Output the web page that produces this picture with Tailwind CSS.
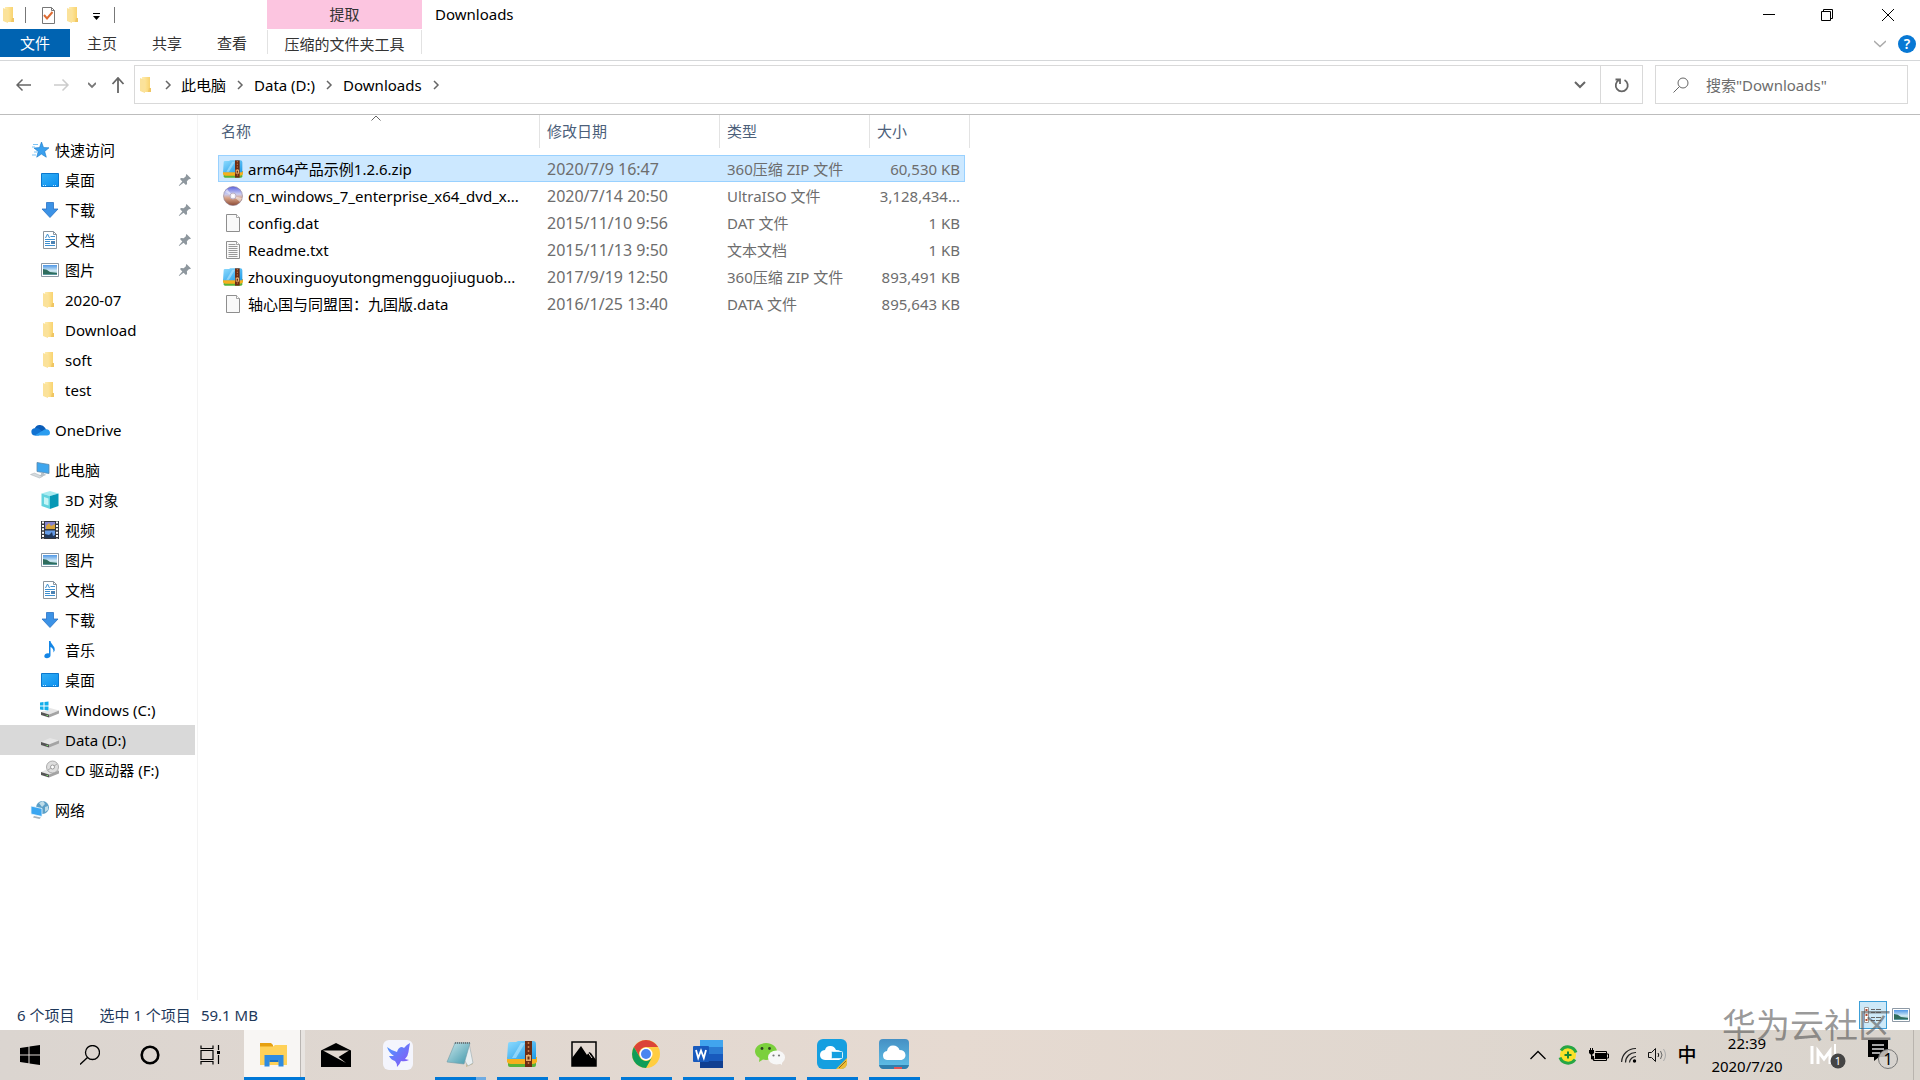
<!DOCTYPE html>
<html lang="zh-CN">
<head>
  <meta charset="UTF-8" />
  <meta name="viewport" content="width=device-width, initial-scale=1.0" />
  <title>Downloads</title>
  <script src="https://cdn.jsdelivr.net/npm/@tailwindcss/browser@4"></script>
</head>
<body class="h-screen flex flex-col overflow-hidden bg-white text-black text-[15px] leading-5 font-['Noto_Sans','Noto_Sans_CJK_SC',sans-serif]">

  <!-- Shared icons -->
  <svg class="absolute w-0 h-0">
    <defs>
      <linearGradient id="gFolder"><stop offset="0" stop-color="#ffedb0"/><stop offset="1" stop-color="#f8d068"/></linearGradient>
      <linearGradient id="gDesk" x2="1" y2="1"><stop offset="0" stop-color="#35b0f5"/><stop offset="1" stop-color="#0a8ff0"/></linearGradient>
      <linearGradient id="gZip" x2="1" y2="1"><stop offset="0" stop-color="#8fdcff"/><stop offset="1" stop-color="#1e9ae6"/></linearGradient>
      <linearGradient id="gDisc" x2="0" y2="1"><stop offset="0" stop-color="#5a62e0"/><stop offset=".4" stop-color="#c9cdf2"/><stop offset=".6" stop-color="#d9a58a"/><stop offset="1" stop-color="#8c4a34"/></linearGradient>
      <linearGradient id="gSky" x2="0" y2="1"><stop offset="0" stop-color="#4f97e6"/><stop offset=".6" stop-color="#d5ecf5"/><stop offset="1" stop-color="#4a8d92"/></linearGradient>
      <linearGradient id="gNote" x2="1" y2="1"><stop offset="0" stop-color="#c8e6ea"/><stop offset="1" stop-color="#3f97ab"/></linearGradient>
      <linearGradient id="gBird" x2="1" y2="1"><stop offset="0" stop-color="#4d9bff"/><stop offset="1" stop-color="#8a52f5"/></linearGradient>
      <linearGradient id="gCloud" x2="0" y2="1"><stop offset="0" stop-color="#4590c4"/><stop offset="1" stop-color="#5fc0e8"/></linearGradient>
    </defs>
    <symbol id="folder" viewBox="0 0 20 20">
      <path fill="url(#gFolder)" d="M5 2h8v11l1 1v3H5z"/><path fill="#fbe29a" d="M3 3l5 2v13l-5-2z"/><path fill="#f0c663" d="M12 13h2v4h-3z"/>
    </symbol>
    <symbol id="star" viewBox="0 0 20 20">
      <path fill="#3aa0ee" stroke="#1878c8" stroke-width=".6" d="M11.500 2l2 5.500 5.500.3-4.300 3.600 1.600 5.800-4.900-3.100-4.700 3.100 1.500-5.600L4 8l5.500-.4z"/>
      <path stroke="#7cc4f6" stroke-width="1.200" d="M3 4.500h5M2 7h3M4 12h3M2 15h4"/>
    </symbol>
    <symbol id="desktop" viewBox="0 0 20 20">
      <path fill="url(#gDesk)" stroke="#0b78ce" d="M1.500 3.500h17v13h-17z"/><path stroke="#fff" stroke-dasharray="1 1" stroke-width=".8" d="M3 15.500h4M13 15.500h4"/>
    </symbol>
    <symbol id="download" viewBox="0 0 20 20">
      <path fill="#3b92e6" stroke="#2a72c4" stroke-width=".8" d="M6.500 2.500h7V9H18l-8 8.500L2 9h4.500z"/>
    </symbol>
    <symbol id="doc" viewBox="0 0 20 20">
      <path fill="#fff" stroke="#8b959e" d="M3.500 1.500h10l3 3v14h-13z"/><path fill="none" stroke="#8b959e" d="M13.500 1.500v3h3"/>
      <path fill="none" stroke="#3d8fd0" d="M5.500 8l2-4 2 4M10.500 6.500H15M5 9.500h10M5 11.500h5M5 13.500h5M5 15.500h10"/><path fill="#4d83b4" d="M11 11h4v3h-4z"/>
    </symbol>
    <symbol id="picture" viewBox="0 0 20 20">
      <path fill="#fff" stroke="#8d99a5" d="M1.500 3.500h17v13h-17z"/><path fill="url(#gSky)" d="M3 5h14v10H3z"/><path fill="#2f6d5d" d="M3 9q4 0 7 3l7 1v1H3z"/>
    </symbol>
    <symbol id="pin" viewBox="0 0 14 14">
      <path fill="#8e979e" d="M8.500 1l4.500 4.500-1.400.8-.5-.3-2.200 2.300.2 2.700-1.200 1L5.600 9.700 1.200 13l-.4-.4L4.300 8.400 2 6.100l1-1.200 2.700.3 2.400-2.300-.3-.6z"/>
    </symbol>
    <symbol id="onedrive" viewBox="0 0 22 20">
      <path fill="#0a5cb8" d="M5 8.500a6.500 6.500 0 0 1 11.500-1L18 10l-8 5z"/><path fill="#1273d2" d="M5.500 8q3-.5 5 1.200l4 3-5 3.800H5.500a4 4 0 0 1 0-8z"/><path fill="#2a9df0" d="M5 16l11-6.500c3.500-1.300 6 1 6 3.500s-2 3-3 3z"/>
    </symbol>
    <symbol id="pc" viewBox="0 0 20 20">
      <path fill="#3ea6ee" stroke="#5d89aa" stroke-width=".8" d="M7 2.500l12 2v9l-12-2z"/><path fill="#b9c2c9" d="M11 12.500l3 .5v2h-3zM9 15l6-1 1 1-5 2z"/><path fill="#d4dadd" stroke="#a6afb5" stroke-width=".5" d="M.5 14.500l4-1.500 8 3.500-3 1.500z"/>
    </symbol>
    <symbol id="cube" viewBox="0 0 20 20">
      <path fill="#a8ebf0" d="M10 1l8.500 2.500L10 6 1.500 3.500z"/><path fill="#62d3de" d="M1.500 3.500L10 6v13l-8.500-3z"/><path fill="#0798b5" d="M18.500 3.500L10 6v13l8.500-3z"/><path fill="#c6f5f6" d="M4 7l4.500 1.500v7L4 14z"/>
    </symbol>
    <symbol id="video" viewBox="0 0 20 20">
      <path fill="#34373d" d="M1 1h18v18H1z"/><path stroke="#fff" stroke-width="2" stroke-dasharray="2 1.400" d="M3 1.500v18M17 1.500v18"/><path fill="#8583cf" d="M5 2h10v7H5z"/><path fill="#d7a43c" d="M6 6l3-3 2 3 4-2v5H6z"/><path fill="#649be6" d="M5 10.500h10V18H5z"/><path fill="#20395d" d="M5 14l4 1 3-3 1 4 2-1v3H5z"/>
    </symbol>
    <symbol id="music" viewBox="0 0 20 20">
      <path fill="#1486e6" d="M9 1h1.500c.4 3.500 5 5 4.200 9.500l-1.200 2c.3-3-1-4.500-3-5.500v8.500c0 3-6 4-6.200.8C4.300 14 7 12.800 9 13.500z"/>
    </symbol>
    <symbol id="drive" viewBox="0 0 20 20">
      <path fill="#e6e6e6" d="M1 12l9-4 9 2.500-10 4z"/><path fill="#555" d="M1 12l8 2.500v3L1 15z"/><path fill="#a4a4a4" d="M9 14.500l10-4v3l-10 4z"/><path fill="#7be06c" d="M6.500 15h1.500v1H6.500z"/>
    </symbol>
    <symbol id="windrive" viewBox="0 0 20 20">
      <use href="#drive"/><path fill="#fff" d="M0 1h9v10H0z"/><path fill="#14aeea" d="M0 2.500L3.500 2v3.500H0zM4.500 2L8.500 1.500v4h-4zM0 6.500h3.500V10L0 9.500zM4.500 6.500h4v4l-4-.5z"/>
    </symbol>
    <symbol id="cddrive" viewBox="0 0 20 20">
      <use href="#drive"/><circle cx="12.500" cy="7" r="6" fill="#dedede" stroke="#999" stroke-width=".8"/><circle cx="12.500" cy="7" r="2" fill="#fff" stroke="#888" stroke-width=".8"/><path stroke="#aaa" d="M8 10l3-2M14 6l3-2"/>
    </symbol>
    <symbol id="network" viewBox="0 0 20 20">
      <circle cx="12.500" cy="7.500" r="6.500" fill="#5c9fc6"/><path fill="#bfdde9" d="M9 3l4-2 2 3-3 3zM15 7l3-1v4l-3 2z"/><path fill="#3aa6f1" stroke="#eef7fc" stroke-width=".8" d="M1 6l11 2.500v8L1 14z"/><path fill="#a7b2ba" d="M4 16l7 1.500-1.500 1.500L3 17.500z"/>
    </symbol>
    <symbol id="zip" viewBox="0 0 30 28">
      <path fill="#58b33a" d="M1 20h28v5q0 2-2 2H3q-2 0-2-2z"/><path fill="#f5b01e" d="M0 17h30v5q-2 2-4 2H4q-3 0-4-2z"/><path fill="url(#gZip)" d="M1 4q0-2 2-2h6l2-1h15q3 0 3 3v15H0z"/><path fill="#b7e8ff" opacity=".6" d="M5 18L14 3h4L9 18z"/>
      <path fill="#6b2c13" d="M18 1h7v26h-7z"/><path stroke="#c77a45" stroke-width="1.500" stroke-dasharray="2 2" d="M21.500 2v24"/><path fill="#e7b070" d="M19 15h5v6h-5z"/><path fill="#6b2c13" d="M20.500 16.500h2v3h-2z"/>
    </symbol>
    <symbol id="disc" viewBox="0 0 20 20">
      <circle cx="10" cy="10" r="9.500" fill="url(#gDisc)" stroke="#8b7d92" stroke-width=".6"/><path fill="#fff" opacity=".5" d="M10 10L2 6l2-3zM10 10l9 2-2 4z"/><circle cx="10" cy="10" r="3" fill="#f5f1f7" stroke="#b9b0c4"/><circle cx="10" cy="10" r="1.200" fill="#fff"/>
    </symbol>
    <symbol id="file" viewBox="0 0 20 20">
      <path fill="#f9f9f9" stroke="#8e8e8e" d="M3.500 1.500h10l3 3v14h-13z"/><path fill="#fff" stroke="#8e8e8e" stroke-width=".8" d="M13.500 1.500v3h3"/>
    </symbol>
    <symbol id="text" viewBox="0 0 20 20">
      <use href="#file"/><path stroke="#999" d="M5.500 4.500h7M5.500 6.500h9M5.500 8.500h9M5.500 10.500h9M5.500 12.500h9M5.500 14.500h9M5.500 16.500h9"/>
    </symbol>
    <symbol id="chev" viewBox="0 0 8 10"><path fill="none" stroke="#666" stroke-width="1.500" d="M2 1l4 4-4 4"/></symbol>
  </svg>

  <!-- Title bar and ribbon tabs -->
  <header class="flex h-[61px] shrink-0 border-b border-[#d5d7d9]">
    <div class="w-[267px] shrink-0 flex flex-col">
      <div class="h-[29px] flex items-center">
        <svg class="w-5 h-5"><use href="#folder"/></svg>
        <span class="w-px h-4 bg-[#777] ml-[5px]"></span>
        <button class="ml-3 w-5 h-5" aria-label="属性">
          <svg class="w-5 h-5" viewBox="0 0 20 20"><path fill="#fff" stroke="#777" d="M4.500 2.500h9l3 3v13h-12z"/><path fill="none" stroke="#777" d="M13.500 2.500v3h3"/><path fill="none" stroke="#dd6b33" stroke-width="2" d="M6 10l3 3.500L14.500 7"/></svg>
        </button>
        <button class="ml-[6px] w-5 h-5" aria-label="新建文件夹"><svg class="w-5 h-5"><use href="#folder"/></svg></button>
        <button class="ml-[6px] w-3 h-5" aria-label="自定义快速访问工具栏">
          <svg class="w-3 h-5" viewBox="0 0 12 20"><path d="M3 8h7v1H3zM3 11h7l-3.500 4z"/></svg>
        </button>
        <span class="w-px h-4 bg-[#777] ml-3"></span>
      </div>
      <div class="h-7 flex items-center">
        <button class="w-[70px] h-7 bg-[#0063b1] text-white">文件</button>
        <button class="w-16 h-7 text-[#333]">主页</button>
        <button class="w-[66px] h-7 text-[#333]">共享</button>
        <button class="w-16 h-7 text-[#333]">查看</button>
      </div>
    </div>
    <div class="w-[155px] shrink-0 text-center text-[#333]">
      <div class="h-[29px] leading-7 bg-[#fcc5e0]">提取</div>
      <button class="w-full h-6 mt-px border-x border-[#e2e2e2] pt-1">压缩的文件夹工具</button>
    </div>
    <h1 class="h-[29px] leading-[29px] ml-[13px] grow">Downloads</h1>
    <div class="flex flex-col">
      <div class="h-[29px] flex items-center">
        <button class="w-[58px] h-7 grid place-items-center" aria-label="最小化"><svg class="w-3 h-3" viewBox="0 0 12 12"><path stroke="#000" d="M0 5.500h12"/></svg></button>
        <button class="w-[58px] h-7 grid place-items-center" aria-label="还原"><svg class="w-3 h-3" viewBox="0 0 12 12"><path fill="none" stroke="#000" d="M.5 2.500h9v9h-9zM2.500 2.500v-2h9v9h-2"/></svg></button>
        <button class="w-16 h-7 grid place-items-center" aria-label="关闭"><svg class="w-3 h-3" viewBox="0 0 12 12"><path stroke="#000" d="M0 0l12 12M12 0L0 12"/></svg></button>
      </div>
      <div class="h-[30px] flex items-center justify-end gap-3 pr-1">
        <button aria-label="展开功能区"><svg class="w-3 h-2" viewBox="0 0 12 8"><path fill="none" stroke="#aaa" stroke-width="1.500" d="M0 1l6 5.500L12 1"/></svg></button>
        <button class="w-[18px] h-[18px] rounded-full bg-[#0878d4] text-white text-[14px] font-semibold leading-[18px]" aria-label="帮助">?</button>
      </div>
    </div>
  </header>

  <!-- Address bar -->
  <div class="flex items-center h-[54px] shrink-0 pt-1 pb-[10px] pr-3 border-b border-[#bdbdbd]">
    <div class="flex items-center w-[130px] pl-4">
      <button aria-label="后退"><svg class="w-4 h-4" viewBox="0 0 16 16"><path fill="none" stroke="#666" stroke-width="1.500" d="M15 8H1M6.500 2.500L1 8l5.500 5.500"/></svg></button>
      <button class="ml-[22px]" aria-label="前进"><svg class="w-4 h-4" viewBox="0 0 16 16"><path fill="none" stroke="#ccc" stroke-width="1.500" d="M0 8h14M8.500 2.500L14 8l-5.500 5.500"/></svg></button>
      <button class="ml-[18px]" aria-label="最近浏览的位置"><svg class="w-2 h-2" viewBox="0 0 8 8"><path fill="none" stroke="#777" stroke-width="1.800" d="M0 2l4 4 4-4"/></svg></button>
      <button class="ml-[14px]" aria-label="上移"><svg class="w-4 h-4" viewBox="0 0 16 16"><path fill="none" stroke="#666" stroke-width="1.800" d="M8 16V1M2.500 7L8 1l5.500 6"/></svg></button>
    </div>
    <nav class="grow flex h-[39px] items-center border border-[#d9d9d9] ml-1">
      <svg class="w-5 h-5 ml-0.5"><use href="#folder"/></svg>
      <svg class="w-2 h-2.5 ml-[7px]"><use href="#chev"/></svg>
      <a href="#" class="ml-[9px]">此电脑</a>
      <svg class="w-2 h-2.5 ml-[10px]"><use href="#chev"/></svg>
      <a href="#" class="ml-[10px]">Data (D:)</a>
      <svg class="w-2 h-2.5 ml-[10px]"><use href="#chev"/></svg>
      <a href="#" class="ml-[10px]">Downloads</a>
      <svg class="w-2 h-2.5 ml-[10px]"><use href="#chev"/></svg>
      <button class="ml-auto w-10 h-full grid place-items-center" aria-label="以前的位置"><svg class="w-3 h-2" viewBox="0 0 12 8"><path fill="none" stroke="#666" stroke-width="2" d="M1 1l5 5 5-5"/></svg></button>
      <button class="w-[42px] h-full grid place-items-center border-l border-[#d9d9d9]" aria-label="刷新"><svg class="w-4 h-4" viewBox="0 0 16 16"><path fill="none" stroke="#666" stroke-width="1.800" d="M10.500 3A6 6 0 1 1 5 3M1.500 2.500H6V7"/></svg></button>
    </nav>
    <label class="ml-3 w-[253px] h-[39px] border border-[#d9d9d9] flex items-center">
      <svg class="w-4 h-4 ml-[17px]" viewBox="0 0 16 16"><circle cx="10" cy="6" r="5" fill="none" stroke="#666"/><path stroke="#666" d="M6.500 9.500L.5 15.500"/></svg>
      <input type="text" aria-label="搜索" placeholder='搜索"Downloads"' class="ml-[17px] w-40 outline-none placeholder:text-[#6d6d6d]" />
    </label>
  </div>

  <main class="flex grow min-h-0">
    <!-- Navigation pane -->
    <nav class="w-[198px] shrink-0 border-r border-[#f3f3f3] pt-5 flex flex-col gap-[10px]">
      <div>
        <a href="#" class="flex items-center h-[30px] pl-[30px] gap-[5px]"><svg class="w-5 h-5"><use href="#star"/></svg>快速访问</a>
        <a href="#" class="flex items-center h-[30px] pl-10 gap-[5px]"><svg class="w-5 h-5"><use href="#desktop"/></svg>桌面<svg class="w-3.5 h-3.5 ml-auto mr-[5px]"><use href="#pin"/></svg></a>
        <a href="#" class="flex items-center h-[30px] pl-10 gap-[5px]"><svg class="w-5 h-5"><use href="#download"/></svg>下载<svg class="w-3.5 h-3.5 ml-auto mr-[5px]"><use href="#pin"/></svg></a>
        <a href="#" class="flex items-center h-[30px] pl-10 gap-[5px]"><svg class="w-5 h-5"><use href="#doc"/></svg>文档<svg class="w-3.5 h-3.5 ml-auto mr-[5px]"><use href="#pin"/></svg></a>
        <a href="#" class="flex items-center h-[30px] pl-10 gap-[5px]"><svg class="w-5 h-5"><use href="#picture"/></svg>图片<svg class="w-3.5 h-3.5 ml-auto mr-[5px]"><use href="#pin"/></svg></a>
        <a href="#" class="flex items-center h-[30px] pl-10 gap-[5px]"><svg class="w-5 h-5"><use href="#folder"/></svg>2020-07</a>
        <a href="#" class="flex items-center h-[30px] pl-10 gap-[5px]"><svg class="w-5 h-5"><use href="#folder"/></svg>Download</a>
        <a href="#" class="flex items-center h-[30px] pl-10 gap-[5px]"><svg class="w-5 h-5"><use href="#folder"/></svg>soft</a>
        <a href="#" class="flex items-center h-[30px] pl-10 gap-[5px]"><svg class="w-5 h-5"><use href="#folder"/></svg>test</a>
      </div>
      <a href="#" class="flex items-center h-[30px] pl-[30px] gap-[5px]"><svg class="w-5 h-5"><use href="#onedrive"/></svg>OneDrive</a>
      <div>
        <a href="#" class="flex items-center h-[30px] pl-[30px] gap-[5px]"><svg class="w-5 h-5"><use href="#pc"/></svg>此电脑</a>
        <a href="#" class="flex items-center h-[30px] pl-10 gap-[5px]"><svg class="w-5 h-5"><use href="#cube"/></svg>3D 对象</a>
        <a href="#" class="flex items-center h-[30px] pl-10 gap-[5px]"><svg class="w-5 h-5"><use href="#video"/></svg>视频</a>
        <a href="#" class="flex items-center h-[30px] pl-10 gap-[5px]"><svg class="w-5 h-5"><use href="#picture"/></svg>图片</a>
        <a href="#" class="flex items-center h-[30px] pl-10 gap-[5px]"><svg class="w-5 h-5"><use href="#doc"/></svg>文档</a>
        <a href="#" class="flex items-center h-[30px] pl-10 gap-[5px]"><svg class="w-5 h-5"><use href="#download"/></svg>下载</a>
        <a href="#" class="flex items-center h-[30px] pl-10 gap-[5px]"><svg class="w-5 h-5"><use href="#music"/></svg>音乐</a>
        <a href="#" class="flex items-center h-[30px] pl-10 gap-[5px]"><svg class="w-5 h-5"><use href="#desktop"/></svg>桌面</a>
        <a href="#" class="flex items-center h-[30px] pl-10 gap-[5px]"><svg class="w-5 h-5"><use href="#windrive"/></svg>Windows (C:)</a>
        <a href="#" class="flex items-center h-[30px] pl-10 gap-[5px] mr-0.5 bg-[#d9d9d9]"><svg class="w-5 h-5"><use href="#drive"/></svg>Data (D:)</a>
        <a href="#" class="flex items-center h-[30px] pl-10 gap-[5px]"><svg class="w-5 h-5"><use href="#cddrive"/></svg>CD 驱动器 (F:)</a>
      </div>
      <a href="#" class="flex items-center h-[30px] pl-[30px] gap-[5px]"><svg class="w-5 h-5"><use href="#network"/></svg>网络</a>
    </nav>

    <!-- File list -->
    <div class="grow pl-5">
      <table class="table-fixed w-[752px] border-separate border-spacing-0 text-[#6d6d6d]">
        <colgroup><col class="w-[322px]"><col class="w-[180px]"><col class="w-[150px]"><col class="w-[95px]"><col class="w-[5px]"></colgroup>
        <thead class="text-left text-[#4c607a]">
          <tr class="h-10 align-top">
            <th class="relative p-0 font-normal">
              <svg class="absolute top-0 left-[153px] w-[10px] h-[6px]" viewBox="0 0 10 6"><path fill="none" stroke="#666" d="M.5 5.500L5 1l4.500 4.500"/></svg>
              <div class="h-[33px] leading-8 pl-[3px] border-r border-[#e3e3e3]">名称</div>
            </th>
            <th class="p-0 font-normal"><div class="h-[33px] leading-8 pl-[7px] border-r border-[#e3e3e3]">修改日期</div></th>
            <th class="p-0 font-normal"><div class="h-[33px] leading-8 pl-[7px] border-r border-[#e3e3e3]">类型</div></th>
            <th colspan="2" class="p-0 font-normal"><div class="h-[33px] leading-8 pl-[7px] border-r border-[#e3e3e3]">大小</div></th>
          </tr>
        </thead>
        <tbody>
          <tr class="h-[27px]">
            <td class="p-0 pl-1 bg-[#cce8ff] border-y border-l border-[#99d1ff] text-black"><div class="flex items-center gap-[5px]"><svg class="w-5 h-5 shrink-0"><use href="#zip"/></svg><span class="truncate">arm64产品示例1.2.6.zip</span></div></td>
            <td class="p-0 pl-[7px] bg-[#cce8ff] border-y border-[#99d1ff] text-base leading-5">2020/7/9 16:47</td>
            <td class="p-0 pl-[7px] bg-[#cce8ff] border-y border-[#99d1ff]">360压缩 ZIP 文件</td>
            <td class="p-0 pr-1 text-right bg-[#cce8ff] border-y border-r border-[#99d1ff]">60,530 KB</td>
            <td class="p-0"></td>
          </tr>
          <tr class="h-[27px]">
            <td class="p-0 pl-[5px] text-black"><div class="flex items-center gap-[5px]"><svg class="w-5 h-5 shrink-0"><use href="#disc"/></svg><span class="whitespace-nowrap">cn_windows_7_enterprise_x64_dvd_x...</span></div></td>
            <td class="p-0 pl-[7px] text-base leading-5">2020/7/14 20:50</td><td class="p-0 pl-[7px]">UltraISO 文件</td><td class="p-0 pr-[5px] text-right">3,128,434...</td><td class="p-0"></td>
          </tr>
          <tr class="h-[27px]">
            <td class="p-0 pl-[5px] text-black"><div class="flex items-center gap-[5px]"><svg class="w-5 h-5 shrink-0"><use href="#file"/></svg><span class="truncate">config.dat</span></div></td>
            <td class="p-0 pl-[7px] text-base leading-5">2015/11/10 9:56</td><td class="p-0 pl-[7px]">DAT 文件</td><td class="p-0 pr-[5px] text-right">1 KB</td><td class="p-0"></td>
          </tr>
          <tr class="h-[27px]">
            <td class="p-0 pl-[5px] text-black"><div class="flex items-center gap-[5px]"><svg class="w-5 h-5 shrink-0"><use href="#text"/></svg><span class="truncate">Readme.txt</span></div></td>
            <td class="p-0 pl-[7px] text-base leading-5">2015/11/13 9:50</td><td class="p-0 pl-[7px]">文本文档</td><td class="p-0 pr-[5px] text-right">1 KB</td><td class="p-0"></td>
          </tr>
          <tr class="h-[27px]">
            <td class="p-0 pl-[5px] text-black"><div class="flex items-center gap-[5px]"><svg class="w-5 h-5 shrink-0"><use href="#zip"/></svg><span class="whitespace-nowrap">zhouxinguoyutongmengguojiuguob...</span></div></td>
            <td class="p-0 pl-[7px] text-base leading-5">2017/9/19 12:50</td><td class="p-0 pl-[7px]">360压缩 ZIP 文件</td><td class="p-0 pr-[5px] text-right">893,491 KB</td><td class="p-0"></td>
          </tr>
          <tr class="h-[27px]">
            <td class="p-0 pl-[5px] text-black"><div class="flex items-center gap-[5px]"><svg class="w-5 h-5 shrink-0"><use href="#file"/></svg><span class="truncate">轴心国与同盟国：九国版.data</span></div></td>
            <td class="p-0 pl-[7px] text-base leading-5">2016/1/25 13:40</td><td class="p-0 pl-[7px]">DATA 文件</td><td class="p-0 pr-[5px] text-right">895,643 KB</td><td class="p-0"></td>
          </tr>
        </tbody>
      </table>
    </div>
  </main>

  <!-- Status bar -->
  <div class="flex items-center h-[30px] shrink-0 pl-[17px] pr-[9px] text-[#1e395b]">
    <span>6 个项目</span>
    <span class="ml-[25px]">选中 1 个项目</span>
    <span class="ml-[10px]">59.1 MB</span>
    <button class="ml-auto w-7 h-7 grid place-items-center bg-[#cde9f8] border border-[#3c9fd8]" aria-label="详细信息">
      <svg class="w-[18px] h-4" viewBox="0 0 18 16"><path fill="#fff" stroke="#999" d="M.5.5h4v15h-4z"/><path fill="#b04a2f" d="M1.500 2h2v2h-2zM1.500 7h2v2h-2zM1.500 12h2v2h-2z"/><path stroke="#666" d="M7 2.500h4M12 2.500h5M7 5.500h4M12 5.500h5M7 10.500h4M12 10.500h5M7 13.500h4M12 13.500h5"/></svg>
    </button>
    <button class="ml-1" aria-label="大缩略图"><svg class="w-5 h-5"><use href="#picture"/></svg></button>
  </div>

  <!-- Taskbar -->
  <footer class="relative flex h-[50px] shrink-0 bg-linear-to-r from-[#dbd5d0] via-[#e6dad1] to-[#d9d4cd]">
    <button class="w-[60px] grid place-items-center" aria-label="开始"><svg class="w-5 h-5" viewBox="0 0 20 20"><path d="M0 3l8.500-1.200v7.700H0zM9.500 1.600L20 0v9.500H9.500zM0 10.500h8.500v7.700L0 17zM9.500 10.500H20V20L9.500 18.400z"/></svg></button>
    <button class="w-[60px] grid place-items-center" aria-label="搜索"><svg class="w-5 h-5" viewBox="0 0 20 20"><circle cx="12.500" cy="7.500" r="7" fill="none" stroke="#000" stroke-width="1.300"/><path stroke="#000" stroke-width="1.300" d="M7.500 12.500L0 19.500"/></svg></button>
    <button class="w-[60px] grid place-items-center" aria-label="Cortana"><svg class="w-5 h-5" viewBox="0 0 20 20"><circle cx="10" cy="10" r="8.300" fill="none" stroke="#000" stroke-width="2.600"/></svg></button>
    <button class="w-[60px] grid place-items-center" aria-label="任务视图"><svg class="w-5 h-5" viewBox="0 0 20 20"><path fill="none" stroke="#000" stroke-width="1.200" d="M1 .5v3h12v-3M1 5.500h12v9H1zM1 19.500v-3h12v3M18.500 0v5M18.500 10v9"/><path d="M17 6h3v3h-3z"/></svg></button>
    <button class="relative ml-1 w-[61px] border-b-[3px] border-[#0078d7] bg-[#f8f6f4] grid place-items-center" aria-label="文件资源管理器">
      <span class="absolute right-0 inset-y-0 w-[5px] border-l border-[#b9b5b2] bg-[#e8e4e1]"></span>
      <svg class="w-[27px] h-6 mt-0.5 mr-0.5" viewBox="0 0 27 24"><path fill="#e6a010" d="M0 0h11l2 2v4H0z"/><path fill="#ffd158" d="M0 3.500h13l2-1.500h12v20H0z"/><path fill="#2f8be0" d="M4.500 12h19v11.500h-5V17h-9v6.500h-5z"/><path fill="#1a72c6" d="M9.500 17h9v2h-9z"/></svg>
    </button>
    <button class="w-[62px] grid place-items-center" aria-label="邮件"><svg class="w-[30px] h-6" viewBox="0 0 30 24"><path d="M15 0l15 7.500V24H0V7.500z"/><path fill="#e2d8d0" d="M2 7.500h26L17.500 14 25 20z"/></svg></button>
    <button class="w-[62px] grid place-items-center" aria-label="迅雷"><svg class="w-[30px] h-[30px]" viewBox="0 0 30 30"><rect width="30" height="30" rx="6" fill="#f4f5fd"/><path fill="url(#gBird)" d="M4 7q5 4 10 5 1-4 4-5 2 0 3 1 2-3 6-5-1 5-1.500 9t-3.500 7l4 1q-4 2-8 1-1 3-4 6 0-4-2-6-4-1-6-5h5q-5-3-7-9z"/></svg></button>
    <button class="w-[62px] grid grid-rows-[1fr_3px] justify-items-center items-center" aria-label="记事本"><svg class="w-[30px] h-7" viewBox="0 0 30 28"><path fill="#c9b58a" d="M24 5l4 19-7 3z"/><path fill="#e9eff1" stroke="#9cadb3" stroke-width=".6" d="M9 3h15l4 20-5 3z"/><path fill="url(#gNote)" stroke="#6e9ba6" stroke-width=".6" d="M10 3h15l-6 21-17-2z"/><path stroke="#707a7e" stroke-width="2" stroke-dasharray="1 1" d="M10 3h15"/></svg><span class="w-[51px] h-[3px] bg-[#0078d7] border-r-[10px] border-[#6fabe2]"></span></button>
    <button class="w-[62px] grid grid-rows-[1fr_3px] justify-items-center items-center" aria-label="360压缩"><svg class="w-[30px] h-7"><use href="#zip"/></svg><span class="w-[51px] h-[3px] bg-[#0078d7]"></span></button>
    <button class="w-[62px] grid grid-rows-[1fr_3px] justify-items-center items-center" aria-label="照片"><svg class="w-[26px] h-[26px]" viewBox="0 0 26 26"><path fill="none" stroke="#000" stroke-width="1.500" d="M1 1h24v24H1z"/><path d="M1 17l9-12 6 9 2-3 2 1 5 7v6H1z"/><path stroke="#e6dad1" d="M16 10l5 7"/></svg><span class="w-[51px] h-[3px] bg-[#0078d7]"></span></button>
    <button class="w-[62px] grid grid-rows-[1fr_3px] justify-items-center items-center" aria-label="Chrome"><svg class="w-7 h-7" viewBox="0 0 28 28"><circle cx="14" cy="14" r="14" fill="#ffcd40"/><path fill="#db4437" d="M1.900 7A14 14 0 0 1 26.100 7H14a7 7 0 0 0-6 10.500z"/><path fill="#0f9d58" d="M1.900 7A14 14 0 0 0 14 28l6-10.500a7 7 0 0 1-12 0z"/><circle cx="14" cy="14" r="6.500" fill="#fff"/><circle cx="14" cy="14" r="5" fill="#4a86f0"/></svg><span class="w-[51px] h-[3px] bg-[#0078d7]"></span></button>
    <button class="w-[62px] grid grid-rows-[1fr_3px] justify-items-center items-center" aria-label="Word"><svg class="w-[30px] h-7" viewBox="0 0 30 28"><path fill="#41a5ee" d="M7 0h23v7H7z"/><path fill="#2b7cd3" d="M7 7h23v7H7z"/><path fill="#185abd" d="M7 14h23v7H7z"/><path fill="#103f91" d="M7 21h23v7H7z"/><rect y="6" width="16" height="16" rx="1" fill="#185abd"/><path fill="none" stroke="#fff" stroke-width="1.800" d="M3 10l2.200 8L8 10.500l2.800 7.500L13 10"/></svg><span class="w-[51px] h-[3px] bg-[#0078d7]"></span></button>
    <button class="w-[62px] grid grid-rows-[1fr_3px] justify-items-center items-center" aria-label="微信"><svg class="w-[30px] h-6" viewBox="0 0 30 24"><path fill="#7bd03c" d="M11 1c6 0 11 3.700 11 8.500S17 18 11 18l-3-.4L4 20l.5-4C1.800 14.500 0 12 0 9.500 0 4.700 5 1 11 1z"/><ellipse cx="21.500" cy="15.500" rx="8.500" ry="7" fill="#f7f7f7"/><path fill="#f7f7f7" d="M24 21l3 2v-4z"/><g fill="#2e4420"><circle cx="7" cy="6.500" r="1.400"/><circle cx="14.500" cy="6.500" r="1.400"/></g><g fill="#777"><circle cx="18.500" cy="13.500" r="1.100"/><circle cx="24" cy="13.500" r="1.100"/></g></svg><span class="w-[51px] h-[3px] bg-[#0078d7]"></span></button>
    <button class="w-[62px] grid grid-rows-[1fr_3px] justify-items-center items-center" aria-label="云桌面"><svg class="w-[30px] h-[30px]" viewBox="0 0 30 30"><rect width="30" height="30" rx="6" fill="#159fe0"/><path fill="#fff" d="M8 21q-5-.5-5-5t5-5q1-4 5-4 4-.5 6 4 6 0 7 5 0 4-4 5z"/><rect x="14.500" y="12.500" width="11" height="7" rx="1" fill="#159fe0" stroke="#d6f0fb"/><path fill="#f1bc35" d="M19 30l11-11v5q0 5-5 6z"/><path stroke="#8b6a1e" d="M22 29l7-7"/></svg><span class="w-[51px] h-[3px] bg-[#0078d7]"></span></button>
    <button class="w-[62px] grid grid-rows-[1fr_3px] justify-items-center items-center" aria-label="云客户端"><svg class="w-[30px] h-[30px]" viewBox="0 0 30 30"><rect width="30" height="29" rx="4" fill="url(#gCloud)"/><path fill="#2f7fae" d="M0 26h30q-1 4-4 4H4q-3 0-4-4z"/><path fill="#e25555" d="M15 28h8v2h-8z"/><path fill="#fff" d="M8 21q-4-.5-4-4.500T8 12q1-5.500 6-5.500t6.500 4.500q5.500 0 6 5 0 4-4 5z"/></svg><span class="w-[51px] h-[3px] bg-[#0078d7]"></span></button>

    <!-- Tray -->
    <div class="ml-auto flex items-center">
      <button class="w-[30px] grid place-items-center" aria-label="显示隐藏的图标"><svg class="w-4 h-[10px]" viewBox="0 0 16 10"><path fill="none" stroke="#000" stroke-width="1.300" d="M.5 9L8 1.500 15.500 9"/></svg></button>
      <button class="w-[30px] grid place-items-center" aria-label="360安全卫士"><svg class="w-5 h-5" viewBox="0 0 20 20"><circle cx="10" cy="10" r="8" fill="#fbe12a"/><path fill="none" stroke="#26a644" stroke-width="3" d="M3 5.500a8.500 8.500 0 0 1 15 2M17 14.500a8.500 8.500 0 0 1-15-2"/><path stroke="#168a35" stroke-width="2" d="M10 6.500v7M6.500 10h7"/></svg></button>
      <button class="w-[31px] grid place-items-center" aria-label="电池"><svg class="w-5 h-3.5" viewBox="0 0 20 14"><path fill="none" stroke="#000" d="M6.500 3.500h11v9h-13V8M18 6h1.500v4H18"/><path d="M6 5h11v6H6zM0 2h5v3L3.500 6.500h-2L0 5z"/><path stroke="#000" d="M1.500 0v2M3.500 0v2M2.500 6v5h3"/></svg></button>
      <button class="w-[30px] grid place-items-center" aria-label="网络"><svg class="w-4 h-4" viewBox="0 0 16 16"><path fill="none" stroke="#222" stroke-width="1.200" d="M.6 15A14 14 0 0 1 15 1.500M4.500 15.500A10 10 0 0 1 15 5.500M8.500 15.500A6.500 6.500 0 0 1 15 9.500"/><circle cx="13.500" cy="14" r="1.700"/></svg></button>
      <button class="w-7 grid place-items-center" aria-label="音量"><svg class="w-5 h-4" viewBox="0 0 20 16"><path fill="none" stroke="#111" d="M.5 5.500h3l4-4v13l-4-4h-3zM10 6q1.500 2 0 4"/><path fill="none" stroke="#666" d="M12.500 4q3 4 0 8"/><path fill="none" stroke="#aaa" d="M15.500 2q4 6 0 12"/></svg></button>
      <button class="w-[30px] text-[19px] leading-6 font-medium" aria-label="输入法">中</button>
      <div class="w-[90px] text-center leading-[23px]">22:39<br>2020/7/20</div>
      <button class="relative ml-[18px] w-9 h-7" aria-label="通知">
        <svg class="w-9 h-7" viewBox="0 0 36 28"><path fill="none" stroke="#fff" stroke-width="3" d="M2 5v18M8 23V10l6 8 6-8v13"/><path stroke="#fff" stroke-width="2" d="M25 3v20"/><circle cx="28" cy="20" r="7.500" fill="#444"/></svg>
        <span class="absolute left-6 top-3 w-2 text-center text-[11px] leading-4 text-white">1</span>
      </button>
      <button class="relative ml-[22px] w-[30px] h-[30px]" aria-label="操作中心">
        <svg class="w-[30px] h-[30px]" viewBox="0 0 30 30"><path d="M0 0h20v17h-9l-5 4v-4H0z"/><path stroke="#ddd" stroke-width="1.500" d="M4 5h12M4 9h12M4 13h8"/><circle cx="20" cy="19" r="9.500" fill="#d6d2ce" fill-opacity=".85" stroke="#777"/></svg>
        <span class="absolute left-[14px] top-[9px] w-3 text-center text-[16px] leading-5">1</span>
      </button>
      <span class="ml-[15px] mr-[6px] w-px h-[50px] bg-[#b9b4ae]"></span>
    </div>
    <div class="absolute right-7 -top-[25px] text-[34px] leading-10 text-[#555]/60 whitespace-nowrap pointer-events-none">华为云社区</div>
  </footer>
</body>
</html>
